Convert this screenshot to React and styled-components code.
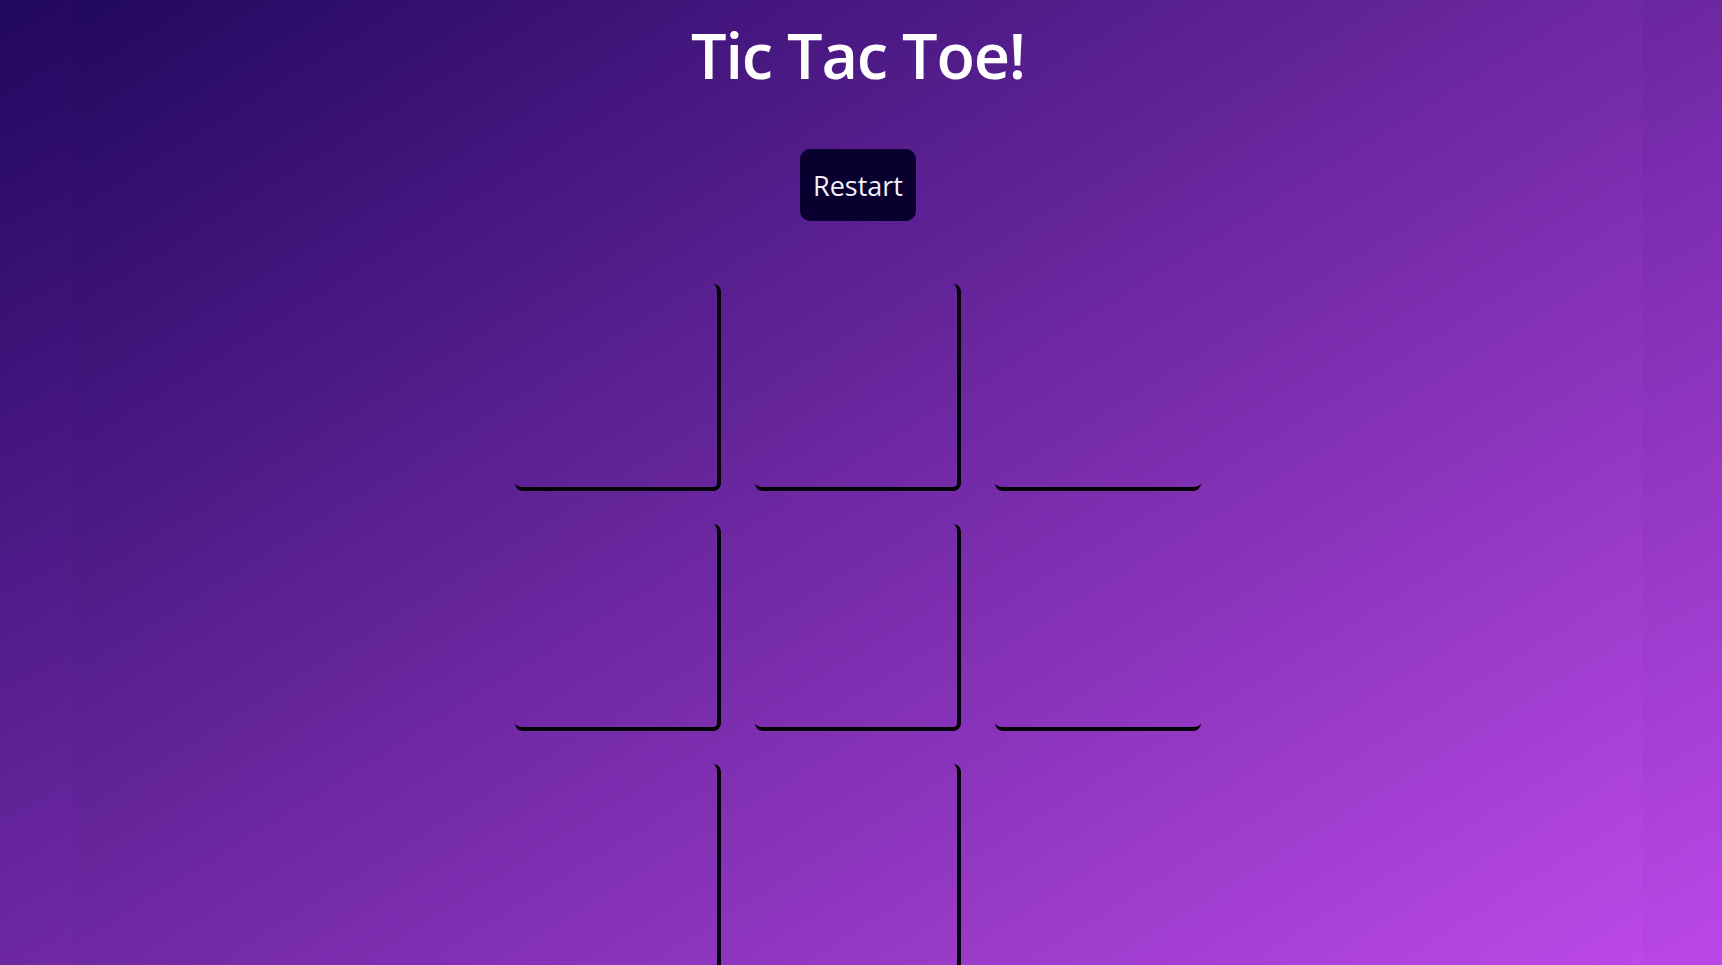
import React from "react";
import styled, { createGlobalStyle } from "styled-components";

const Global = createGlobalStyle`
  html, body {
    margin: 0;
    padding: 0;
    height: 100%;
    overflow: hidden;
  }
  body {
    background: linear-gradient(to bottom right, #21075f, #bb48e8);
    font-family: "Open Sans", "Noto Sans", sans-serif;
  }
`;

const Page = styled.div`
  width: 1568px;
  margin-left: 74px;
  min-height: 965px;
  background: linear-gradient(to bottom right, #22085f, #bc49e8);
  display: flex;
  flex-direction: column;
  align-items: center;
`;

const Title = styled.h1`
  margin: 0;
  padding-top: 9px;
  font-size: 63px;
  font-weight: 600;
  line-height: 92px;
  color: #ffffff;
  letter-spacing: -1.2px;
`;

const RestartButton = styled.button`
  margin-top: 48px;
  width: 116px;
  height: 72px;
  border: none;
  border-radius: 10px;
  background: #0a0030;
  color: #f4f0fa;
  font-family: "Open Sans", "Noto Sans", sans-serif;
  font-size: 27px;
  cursor: pointer;
  padding: 0;
`;

const Board = styled.div`
  margin-top: 63px;
  display: grid;
  grid-template-columns: repeat(3, 206px);
  grid-auto-rows: 207px;
  column-gap: 34px;
  row-gap: 33px;
`;

const Cell = styled.div`
  box-sizing: border-box;
  border-radius: 8px;
  border-right: ${(p) => (p.$lastCol ? "none" : "4px solid #000")};
  border-bottom: ${(p) => (p.$lastRow ? "none" : "4px solid #000")};
`;

export default function App() {
  const cells = Array.from({ length: 9 }, (_, i) => i);
  return (
    <>
      <Global />
      <Page>
        <Title>Tic Tac Toe!</Title>
        <RestartButton>Restart</RestartButton>
        <Board>
          {cells.map((i) => (
            <Cell key={i} $lastCol={i % 3 === 2} $lastRow={i >= 6} />
          ))}
        </Board>
      </Page>
    </>
  );
}
